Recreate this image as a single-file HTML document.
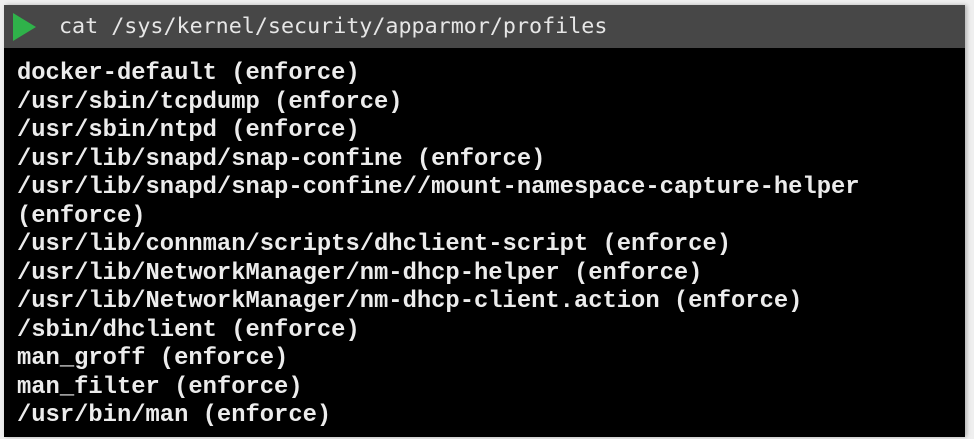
<!DOCTYPE html>
<html><head><style>
html,body{margin:0;padding:0;width:974px;height:439px;background:#efefef;overflow:hidden}
.p{position:absolute;left:4px;top:5px;width:961px;height:432px;background:#000;box-shadow:2px 0 4px rgba(0,0,0,.25)}
.h{position:absolute;left:0;top:0;width:961px;height:43px;background:#474747}
.tri{position:absolute;left:9px;top:8px;width:0;height:0;border-top:14px solid transparent;border-bottom:14px solid transparent;border-left:23px solid #2fb24a}
.cmd{position:absolute;left:55px;top:7px;font:21.7px "DejaVu Sans Mono",monospace;color:#e6e6e6;white-space:pre;line-height:30px}
pre{position:absolute;left:13px;top:55px;margin:0;font:bold 23.8px/28.5px "Liberation Mono",monospace;color:#ececec}
</style></head><body>
<div class="p"><div class="h"><div class="tri"></div><div class="cmd">cat /sys/kernel/security/apparmor/profiles</div></div>
<pre>docker-default (enforce)
/usr/sbin/tcpdump (enforce)
/usr/sbin/ntpd (enforce)
/usr/lib/snapd/snap-confine (enforce)
/usr/lib/snapd/snap-confine//mount-namespace-capture-helper
(enforce)
/usr/lib/connman/scripts/dhclient-script (enforce)
/usr/lib/NetworkManager/nm-dhcp-helper (enforce)
/usr/lib/NetworkManager/nm-dhcp-client.action (enforce)
/sbin/dhclient (enforce)
man_groff (enforce)
man_filter (enforce)
/usr/bin/man (enforce)</pre></div>
</body></html>
